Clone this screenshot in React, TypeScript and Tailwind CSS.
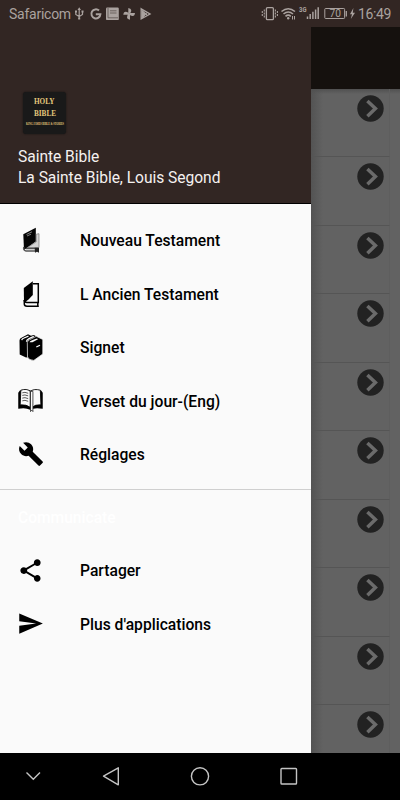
import React from "react";

function NewTestamentIcon() {
  return (
    <svg width="26" height="28" viewBox="0 0 26 28">
      <path d="M5.3 8.2 L17.8 1.7 V15.5 L6 24Z" fill="#050505" />
      <path d="M8.5 8.5 L14 5.8 M9 10 L13 8.2" stroke="#999" strokeWidth=".8" />
      <path d="M18.3 8.2 L21 7.7 V21.5 H9.5 L18.3 15.8Z" fill="#d4d4d4" stroke="#777" strokeWidth=".7" />
      <path d="M5.8 21 Q5 24.5 8 25 H18 M8 22.6 H20" fill="none" stroke="#555" strokeWidth="1.5" />
      <path d="M16.7 21.7 H21 V26.8 L19 25.8 L17 26.8Z" fill="#222" />
    </svg>
  );
}

function OldTestamentIcon() {
  return (
    <svg width="26" height="28" viewBox="0 0 26 28">
      <path d="M5.8 8 L14.8 1.2 V15 L10.5 19.5 L6 23Z" fill="#000" />
      <path d="M15 3.7 H20.3 V22.5 H9 Q6.3 22.5 6.3 20" fill="none" stroke="#000" strokeWidth="1.5" />
      <path d="M6.3 20 V24 Q6.3 26.2 9 26.2 H20.8 M19.8 22.5 V26" fill="none" stroke="#000" strokeWidth="1.5" />
    </svg>
  );
}

function BooksIcon() {
  return (
    <svg width="26" height="28" viewBox="0 0 26 28">
      <path d="M1.5 7.5 Q1.5 5.5 3.5 4.8 L10 1.2 L13 2.7 L15.8 2 L18.5 3.4 L17 6 L12 24 L8 24.5 L1.7 21.4Z" fill="#000" />
      <path d="M3.7 7.2 Q4 5.7 6 5 L10.5 3.2 M8.5 8.8 Q8.3 7 11 5.6 L15.8 3.4" fill="none" stroke="#fafafa" strokeWidth="1.3" />
      <path d="M9.3 9.5 Q9.5 7.8 11.5 6.8 L18.3 3.3 L24.8 6.5 V21 L15.8 27.4 Q11 27.4 9.5 24Z" fill="#000" stroke="#fafafa" strokeWidth=".7" />
      <path d="M11.6 9.2 Q12 7.5 19 5.5 L20 6.2 L14.5 9.2Z" fill="#fafafa" />
      <path d="M18.3 14 L22 12.2" stroke="#fafafa" strokeWidth="1.2" />
    </svg>
  );
}

function OpenBookIcon() {
  return (
    <svg width="27" height="28" viewBox="0 0 28 28">
      <path d="M3 3 L1.3 5.5 V22 Q9 20.5 13.5 23 Q18 20.5 26.7 22 V5.5 L25 3Z" fill="#000" />
      <path d="M4 2.8 Q10 .8 13.7 3.8 V20.5 Q10 17.5 3.3 18Z" fill="#fafafa" stroke="#000" strokeWidth=".9" />
      <path d="M14.5 3.8 Q17.5 1 24.2 2.8 L24.8 18 Q18.5 17.5 16 20.5Z" fill="#fafafa" stroke="#000" strokeWidth=".9" />
      <path d="M5.5 5.5 Q8 4.3 11.6 6 M5.5 8.2 Q8 7 11.6 8.7 M5.5 11 Q8 9.8 11.6 11.5 M5.5 13.8 Q8 12.6 11.6 14.3" fill="none" stroke="#555" strokeWidth="1" />
      <path d="M14 4 H16.5 V25 L15.3 23.5 L14 25Z" fill="#fafafa" stroke="#222" strokeWidth=".8" />
    </svg>
  );
}

function WrenchIcon() {
  return (
    <svg width="26" height="26" viewBox="0 0 24 24">
      <path d="M22.7 19l-9.1-9.1c.9-2.3.4-5-1.5-6.9-2-2-5-2.4-7.4-1.3L9 6 6 9 1.6 4.7C.4 7.1.9 10.1 2.9 12.1c1.9 1.9 4.6 2.4 6.9 1.5l9.1 9.1c.4.4 1 .4 1.4 0l2.3-2.3c.5-.4.5-1.1.1-1.4z" />
    </svg>
  );
}

function ShareIcon() {
  return (
    <svg width="27" height="27" viewBox="0 0 24 24">
      <path d="M18 16.08c-.76 0-1.44.3-1.96.77L8.91 12.7c.05-.23.09-.46.09-.7s-.04-.47-.09-.7l7.05-4.11c.54.5 1.25.81 2.04.81 1.66 0 3-1.34 3-3s-1.34-3-3-3-3 1.34-3 3c0 .24.04.47.09.7L8.04 9.81C7.5 9.31 6.79 9 6 9c-1.66 0-3 1.34-3 3s1.34 3 3 3c.79 0 1.5-.31 2.04-.81l7.12 4.16c-.05.21-.08.43-.08.65 0 1.61 1.31 2.92 2.92 2.92s2.92-1.31 2.92-2.92-1.31-2.92-2.92-2.92z" />
    </svg>
  );
}

function SendIcon() {
  return (
    <svg width="27" height="27" viewBox="0 0 24 24">
      <path d="M2.01 21L23 12 2.01 3 2 10l15 2-15 2z" />
    </svg>
  );
}

function MenuItem({ icon, label }: { icon: React.ReactNode; label: string }) {
  return (
    <li className="flex h-[53.4px] items-center pl-[17px]">
      <span className="flex w-[27px] shrink-0 justify-center">{icon}</span>
      <span className="ml-[36px] whitespace-nowrap pt-[1.2px] text-[15.65px] font-medium text-black">{label}</span>
    </li>
  );
}

function StatusBar() {
  return (
    <header className="flex h-[27px] shrink-0 items-center bg-[#322623] text-[#aaa29f]">
      <span className="ml-[9px] w-[65px] pt-[1px] text-[14px] leading-none tracking-[-0.25px]">Safaricom</span>
      <svg width="84" height="20" viewBox="74 4 84 20" fill="none" stroke="currentColor" strokeWidth="1.2">
        <path d="M79.2 9 V19 M75.8 11.5 V14.5 L79.2 16.5 L82.5 14.5 V11.5" />
        <path d="M77.5 10 L79.2 7.2 L81 10Z M75 10.5h2v2h-2z M81.5 10.5h2v2h-2z M78.2 17.5h2v2h-2z" fill="currentColor" stroke="none" />
        <path d="M99 10.6 A4.5 4.5 0 1 0 100.4 14.2 H95.8" strokeWidth="2" />
        <rect x="106" y="7.6" width="12.8" height="12.5" rx="1.2" fill="currentColor" stroke="none" />
        <path d="M108 8 V17.8 H118 M110 10.8 H116.5 M110 13 H116.5" stroke="#655b58" strokeWidth=".9" />
        <path d="M128.3 8 Q133.3 9 130 13.7 H128.3Z M135 13 Q134.5 18 129.5 14.7 V13Z M130 19.7 Q125 19 128.2 14 H130Z M123.3 14.8 Q123.8 9.8 128.8 13 V14.8Z" fill="currentColor" stroke="none" />
        <path d="M141.2 8.8 L150 14 L141.2 18.8Z" strokeWidth="1.4" />
        <path d="M141.5 9 L147.4 15.5 M141.5 18.7 L147.4 12.3" strokeWidth="1" />
        <path d="M142 10 L146 14 L142 18Z" fill="currentColor" stroke="none" />
      </svg>
      <svg className="ml-auto" width="98" height="22" viewBox="260 3 98 22" fill="none" stroke="currentColor">
        <rect x="266.4" y="7.7" width="7" height="12" rx="1" strokeWidth="1.3" />
        <path d="M264.3 9.5 V18 M262.3 11 V16.5 M275.4 9.5 V18 M277.4 11 V16.5" strokeWidth="1.1" strokeDasharray="2 1" />
        <path d="M281.5 11.5 Q288.2 6 295 11.5 M283.5 14 Q288.2 10 293 14 M285.5 16.3 Q288.2 14 290.8 16.3" strokeWidth="1.6" />
        <circle cx="288.2" cy="18.2" r="1.2" fill="currentColor" stroke="none" />
        <path d="M292.5 16 V19.5 M294.5 16 V19.5" strokeWidth="1" />
        <text x="299" y="12.3" fill="currentColor" stroke="none" fontSize="6.3" fontWeight="700" textLength="7.5" lengthAdjust="spacingAndGlyphs">3G</text>
        <path d="M307.5 16.5 V19 M310.2 14 V19 M312.9 11.8 V19 M315.6 9.5 V19 M318.2 7.2 V19" strokeWidth="1.5" />
        <rect x="324.8" y="8.5" width="19.8" height="10" rx=".8" strokeWidth="1" />
        <path d="M346.3 11 V16.5" strokeWidth="1.3" />
        <text x="329.5" y="17.3" fill="currentColor" stroke="none" fontSize="10.2">70</text>
        <path d="M353.4 8 L350 14.3 H352 L350.8 19 L355 12.8 H352.8Z" fill="currentColor" stroke="none" />
      </svg>
      <span className="mr-[8px] w-[34px] whitespace-nowrap pt-[1px] text-[14px] leading-none tracking-[-0.35px]">16:49</span>
    </header>
  );
}

function AppBadge() {
  return (
    <div className="ml-[5px] h-[42px] w-[43px] rounded-[3px] bg-[#191919] shadow-[0_0_2px_#151111]">
      <svg width="43" height="42" viewBox="0 0 43 42" fill="#e3c77c" fontWeight="700" className="overflow-visible font-['Liberation_Serif',serif]">
        <text x="11" y="12.2" fontSize="8" textLength="20.5" lengthAdjust="spacingAndGlyphs">HOLY</text>
        <text x="11" y="24.2" fontSize="8" textLength="22" lengthAdjust="spacingAndGlyphs">BIBLE</text>
        <text x="3" y="32.7" fontSize="3" textLength="38" lengthAdjust="spacingAndGlyphs">KING JAMES BIBLE &amp; STORIES</text>
      </svg>
    </div>
  );
}

function ChapterRow() {
  return (
    <div className="flex h-[68.5px] shrink-0">
      <div className="flex w-[79px] items-start justify-end border-r border-b border-r-[#5e5e5e] border-b-[#555] pr-[5px] pt-[6px]">
        <svg width="27" height="27" viewBox="0 0 27 27">
          <circle cx="13.5" cy="13.5" r="13.2" fill="#222" />
          <path d="M10.4 6 L18.4 13.6 L10.4 21.2" fill="none" stroke="#6b6b6b" strokeWidth="3.5" />
        </svg>
      </div>
    </div>
  );
}

export default function App() {
  return (
    <div className="flex h-[800px] w-[400px] flex-col overflow-hidden bg-black font-[Roboto,sans-serif]">
      <StatusBar />
      <div className="flex h-[726px] shrink-0">
        <aside className="flex w-[311px] shrink-0 flex-col bg-[#fafafa]">
          <div className="flex h-[177px] shrink-0 flex-col border-b border-black bg-[#322623] pl-[18px] pt-[65px] text-[15.6px] tracking-[-0.04px] text-[#f5f1f0]">
            <AppBadge />
            <span className="mt-[13px] leading-[21px]">Sainte Bible</span>
            <span className="leading-[21px]">La Sainte Bible, Louis Segond</span>
          </div>
          <ul className="mt-[9.8px]">
            <MenuItem icon={<NewTestamentIcon />} label="Nouveau Testament" />
            <MenuItem icon={<OldTestamentIcon />} label="L Ancien Testament" />
            <MenuItem icon={<BooksIcon />} label="Signet" />
            <MenuItem icon={<OpenBookIcon />} label="Verset du jour-(Eng)" />
            <MenuItem icon={<WrenchIcon />} label="Réglages" />
          </ul>
          <div className="mt-[8px] h-px shrink-0 bg-[#cfcfcf]" />
          <h2 className="mt-[1px] flex h-[53px] items-center pl-[18px] pt-[3px] text-[15.6px] font-medium text-white">Communicate</h2>
          <ul>
            <MenuItem icon={<ShareIcon />} label="Partager" />
            <MenuItem icon={<SendIcon />} label="Plus d'applications" />
          </ul>
        </aside>
        <main className="flex grow flex-col overflow-hidden bg-[#626262]">
          <div className="h-[61.5px] shrink-0 bg-[#15110e]" />
          <div className="flex grow flex-col overflow-hidden bg-linear-to-r from-[#535353] to-[#626262] to-[12px]">
            <div className="-mb-[5px] h-[5px] shrink-0 bg-linear-to-b from-[#505050] to-transparent" />
            <div className="flex flex-col">
              {Array.from({ length: 10 }, (_, i) => (
                <ChapterRow key={i} />
              ))}
            </div>
          </div>
        </main>
      </div>
      <nav className="h-[47px] shrink-0 bg-black">
        <svg width="400" height="47" viewBox="0 753 400 47" fill="none" stroke="#c4c4c4" strokeWidth="1.4">
          <path d="M26.5 772.5 L33.3 779.3 L40 772.5" />
          <path d="M118.3 767.8 V784.8 L103.5 776.2Z" strokeLinejoin="round" />
          <circle cx="200" cy="776.3" r="8.6" />
          <rect x="281" y="768.5" width="15.5" height="15.5" rx=".8" />
        </svg>
      </nav>
    </div>
  );
}
